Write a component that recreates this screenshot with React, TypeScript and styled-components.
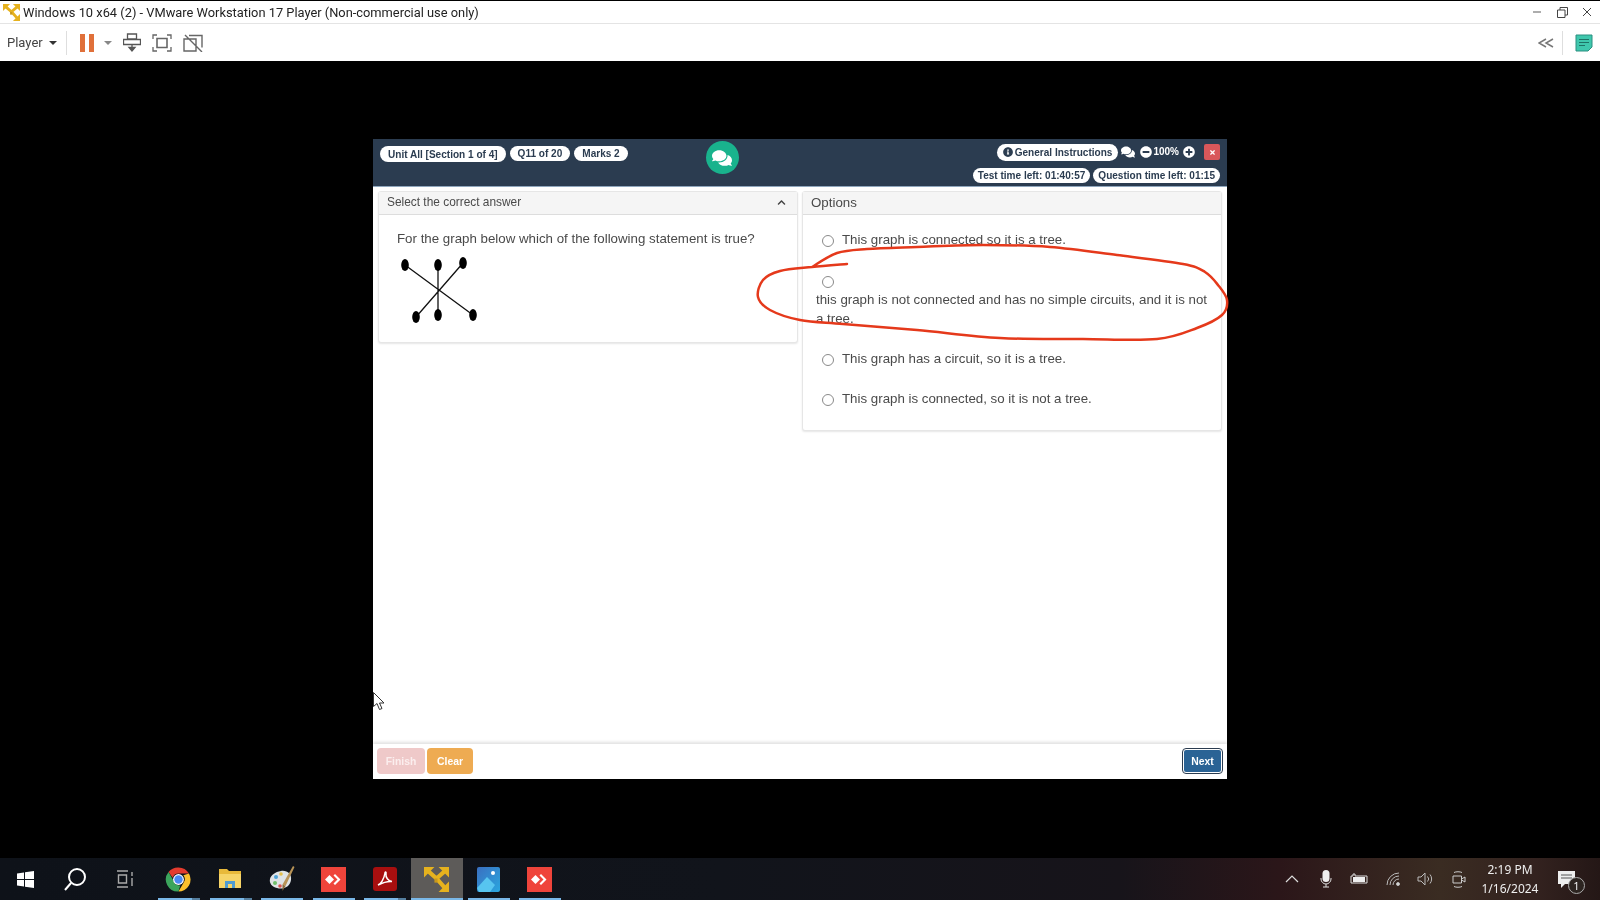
import React from "react";
import styled, { createGlobalStyle } from "styled-components";
import { FaComments, FaInfoCircle, FaMinusCircle, FaPlusCircle, FaTimes, FaChevronUp } from "react-icons/fa";

const Global = createGlobalStyle`
  html, body { margin: 0; padding: 0; background: #000; overflow: hidden; }
  * { box-sizing: border-box; }
`;

const Screen = styled.div`
  position: relative;
  width: 1600px;
  height: 900px;
  display: flex;
  flex-direction: column;
  background: #000;
  font-family: "Liberation Sans", Arial, sans-serif;
  filter: blur(0.3px);
`;

/* ---------- VMware window chrome ---------- */
const TitleBar = styled.div`
  height: 23px;
  margin-top: 1px;
  flex: none;
  display: flex;
  align-items: center;
  background: #fff;
  border-bottom: 1px solid #e4e4e4;
  padding-left: 3px;
  font-family: Roboto, sans-serif;
  font-size: 12.85px;
  color: #222;
`;
const TitleText = styled.span`
  margin-left: 3px;
  white-space: nowrap;
`;
const WindowControls = styled.div`
  margin-left: auto;
  display: flex;
  align-items: center;
`;
const WindowButton = styled.div`
  width: 24px;
  height: 20px;
  display: flex;
  align-items: center;
  justify-content: center;
  margin-right: 1px;
`;
const ToolBar = styled.div`
  height: 37px;
  flex: none;
  display: flex;
  align-items: center;
  background: #fff;
  font-family: Roboto, sans-serif;
  font-size: 13px;
  color: #444;
`;
const PlayerMenu = styled.span`
  margin-left: 7px;
  width: 34px;
`;
const Caret = styled.span<{ $c: string; $ml: number }>`
  width: 0;
  height: 0;
  margin-left: ${(p) => p.$ml}px;
  border-left: 4px solid transparent;
  border-right: 4px solid transparent;
  border-top: 4px solid ${(p) => p.$c};
`;
const ToolSep = styled.span<{ $ml: number }>`
  width: 1px;
  height: 24px;
  background: #dedede;
  margin-left: ${(p) => p.$ml}px;
`;
const PauseIcon = styled.span`
  width: 14px;
  height: 18px;
  margin-left: 13px;
  border-left: 5px solid #e0703a;
  border-right: 5px solid #e0703a;
`;
const ToolIcon = styled.span<{ $ml: number }>`
  display: flex;
  margin-left: ${(p) => p.$ml}px;
`;
const ToolRight = styled.div`
  margin-left: auto;
  display: flex;
  align-items: center;
  padding-right: 7px;
`;

/* ---------- Stage and exam app ---------- */
const Stage = styled.div`
  flex: 1;
  min-height: 0;
  padding: 78px 0 0 373px;
  background: #000;
`;
const ExamApp = styled.div`
  width: 854px;
  height: 640px;
  display: flex;
  flex-direction: column;
  background: #fff;
`;
const AppHeader = styled.header`
  height: 48px;
  flex: none;
  display: flex;
  background: #2b3c50;
  padding: 0 7px;
  border-bottom: 1px solid #8fa6bd;
`;
const PillGroup = styled.div`
  display: flex;
  gap: 4px;
  padding-top: 7px;
  align-items: flex-start;
`;
const Pill = styled.span<{ $h?: number; $pad?: number; $ml?: number }>`
  display: inline-flex;
  align-items: center;
  justify-content: center;
  gap: 2px;
  height: ${(p) => p.$h ?? 16}px;
  padding: 0 ${(p) => p.$pad ?? 8}px;
  margin-left: ${(p) => p.$ml ?? 0}px;
  border-radius: 9px;
  background: #fff;
  color: #2b3c50;
  font-size: 10.05px;
  font-weight: 700;
  white-space: nowrap;
`;
const ChatBubble = styled.div`
  width: 33px;
  height: 33px;
  margin: 2px 0 0 78px;
  border-radius: 50%;
  background: #19b38d;
  color: #fff;
  display: flex;
  align-items: center;
  justify-content: center;
  font-size: 20px;
`;
const HeaderRight = styled.div`
  margin-left: auto;
  display: flex;
  flex-direction: column;
  align-items: flex-end;
  gap: 7px;
  padding-top: 5px;
`;
const HeaderRow = styled.div`
  display: flex;
  align-items: center;
  color: #fff;
`;
const Zoom = styled.span`
  font-size: 10px;
  font-weight: 700;
  margin: 0 4px 2px 1px;
`;
const HeaderIcon = styled.span<{ $ml?: number; $s: number }>`
  display: flex;
  margin-left: ${(p) => p.$ml ?? 0}px;
  margin-bottom: 1px;
  font-size: ${(p) => p.$s}px;
`;
const CloseBox = styled.span`
  width: 16px;
  height: 16px;
  margin-left: 9px;
  align-self: flex-start;
  border-radius: 2px;
  background: #d9575a;
  color: #fff;
  font-size: 7px;
  display: flex;
  align-items: center;
  justify-content: center;
`;
const Content = styled.main`
  flex: 1;
  min-height: 0;
  display: flex;
  align-items: flex-start;
  gap: 4px;
  padding: 4px 5px 0;
`;
const Panel = styled.section<{ $h: number }>`
  flex: 1;
  height: ${(p) => p.$h}px;
  border: 1px solid #e6e6e6;
  border-radius: 3px;
  box-shadow: 0 1px 2px rgba(0, 0, 0, 0.1);
  background: #fff;
`;
const PanelHead = styled.div`
  height: 23px;
  display: flex;
  align-items: center;
  justify-content: space-between;
  padding: 0 11px 2px 8px;
  background: #f5f5f5;
  border-bottom: 1px solid #ddd;
  color: #4a4a4a;
`;
const HeadSmall = styled.span`
  font-size: 11.9px;
`;
const HeadLarge = styled.span`
  font-size: 13.3px;
`;
const QuestionBody = styled.div`
  padding: 15px 18px 0;
  color: #4a4a4a;
  font-size: 13.3px;
  line-height: 18px;
`;
const Graph = styled.svg`
  display: block;
  margin: 8px 0 0 3px;
`;
const OptionList = styled.div`
  padding: 15px 8px 0 13px;
  display: flex;
  flex-direction: column;
  color: #4a4a4a;
  font-size: 13.3px;
  line-height: 19px;
`;
const OptionRow = styled.label<{ $h: number }>`
  height: ${(p) => p.$h}px;
  display: block;
`;
const OptionLine = styled.div`
  display: flex;
  align-items: center;
  padding-left: 6px;
  height: 19px;
`;
const Radio = styled.span`
  width: 12px;
  height: 12px;
  flex: none;
  margin: 2px 8px 0 0;
  border: 1px solid #8a8a8a;
  border-radius: 50%;
  background: #fff;
`;
const AppFooter = styled.footer`
  flex: none;
  height: 35px;
  display: flex;
  align-items: center;
  padding: 0 4px 1px;
  gap: 2px;
  background: #fff;
  box-shadow: 0 -2px 3px rgba(0, 0, 0, 0.12);
`;
const ActionButton = styled.button<{ $bg: string; $w: number; $c?: string }>`
  width: ${(p) => p.$w}px;
  height: 26px;
  padding: 0;
  border: none;
  border-radius: 4px;
  background: ${(p) => p.$bg};
  color: ${(p) => p.$c ?? "#fff"};
  font-family: inherit;
  font-size: 10.4px;
  font-weight: 700;
`;
const NextButton = styled.button`
  width: 41px;
  height: 26px;
  margin-left: auto;
  padding: 0;
  border: 2px solid #fff;
  outline: 1.5px solid #2b3c50;
  outline-offset: -1px;
  border-radius: 4px;
  background: #2a6395;
  color: #fff;
  font-family: inherit;
  font-size: 10.4px;
  font-weight: 700;
`;

/* ---------- Windows taskbar ---------- */
const TaskBar = styled.div`
  height: 42px;
  flex: none;
  display: flex;
  align-items: stretch;
  background: linear-gradient(90deg, #0e1219 0%, #11141b 45%, #17141a 70%, #2b1619 80%, #3a2c22 90%, #33221f 96%, #241716 100%);
`;
const LeftSlot = styled.div<{ $w: number }>`
  width: ${(p) => p.$w}px;
  display: flex;
  align-items: center;
  justify-content: center;
`;
const AppSlot = styled.div<{ $active?: boolean; $stack?: boolean }>`
  position: relative;
  width: 51.6px;
  display: flex;
  align-items: center;
  justify-content: center;
  background: ${(p) => (p.$active ? "#5d5b59" : "transparent")};

  &::after {
    content: "";
    position: absolute;
    bottom: 0;
    left: ${(p) => (p.$active ? 0 : 5)}px;
    width: ${(p) => (p.$active ? 51.6 : 42)}px;
    height: 2px;
    background: ${(p) =>
      p.$stack ? "linear-gradient(90deg, #7ab8e8 80%, #557f9f 80%)" : "#7ab8e8"};
  }
`;
const Tray = styled.div`
  margin-left: auto;
  display: flex;
  align-items: stretch;
  padding-right: 12px;
`;
const TraySlot = styled.div`
  width: 33.4px;
  display: flex;
  align-items: center;
  justify-content: center;
`;
const Clock = styled.div`
  width: 68px;
  display: flex;
  flex-direction: column;
  align-items: center;
  justify-content: center;
  color: #eee;
  font-family: "Noto Sans", sans-serif;
  font-size: 12px;
  line-height: 19px;
  white-space: nowrap;
`;
const Notify = styled.div`
  width: 44px;
  position: relative;
  display: flex;
  align-items: center;
  justify-content: center;
`;
const NotifyBadge = styled.span`
  position: absolute;
  left: 24px;
  top: 19px;
  width: 17px;
  height: 17px;
  border-radius: 50%;
  border: 1px solid #aaa;
  background: #2c2420;
  color: #eee;
  font-family: "Noto Sans", sans-serif;
  font-size: 11px;
  line-height: 15px;
  text-align: center;
`;

/* ---------- overlays ---------- */
const Scribble = styled.svg`
  position: absolute;
  left: 0;
  top: 0;
  pointer-events: none;
`;
const Cursor = styled.svg`
  position: absolute;
  left: 373px;
  top: 692px;
`;

const pts: [number, number][] = [
  [847, 264], [812, 267], [780, 271], [763, 280], [758, 297], [770, 310], [800, 320], [843, 324],
  [917, 330], [1000, 338], [1083, 339], [1157, 339], [1197, 328], [1222, 315], [1227, 300], [1218, 285], [1205, 272],
  [1183, 264], [1117, 255], [1050, 247], [983, 245], [917, 247], [867, 249], [837, 253], [812, 267],
];
const smooth = (p: [number, number][]) => {
  let d = `M${p[0][0]} ${p[0][1]}`;
  for (let i = 0; i < p.length - 1; i++) {
    const a = p[Math.max(i - 1, 0)], b = p[i], c = p[i + 1], e = p[Math.min(i + 2, p.length - 1)];
    d += ` C${b[0] + (c[0] - a[0]) / 6} ${b[1] + (c[1] - a[1]) / 6} ${c[0] - (e[0] - b[0]) / 6} ${c[1] - (e[1] - b[1]) / 6} ${c[0]} ${c[1]}`;
  }
  return d;
};

const VmwareLogo = ({ s }: { s: number }) => (
  <svg width={s} height={s} viewBox="0 0 24 24" fill="#e6b21e">
    <path d="M0 0h10L0 10z" />
    <path d="M24 0H14l10 10z" />
    <path d="M24 24H14l10-10z" />
    <path d="M4 4l8 7M20 4l-8 7M12 11l8 9" fill="none" stroke="#e6b21e" strokeWidth="4" />
    <path d="M10 11h3v4h-3z" fill="#c9981c" />
  </svg>
);
const ChromeIcon = () => (
  <svg width="29" height="29" viewBox="0 0 48 48">
    <path d="M24 4a20 20 0 0 1 17.300 10H24a10 10 0 0 0-9.600 7L7.500 11.500A20 20 0 0 1 24 4z" fill="#e33b2e" />
    <path d="M41.300 14A20 20 0 0 1 24 44l8.600-15A10 10 0 0 0 32 17z" fill="#fbc02d" />
    <path d="M24 44A20 20 0 0 1 7.500 11.500l8.500 15A10 10 0 0 0 27 33.600z" fill="#3ba55c" />
    <circle cx="24" cy="24" r="9" fill="#fff" />
    <circle cx="24" cy="24" r="7" fill="#4a8af4" />
  </svg>
);
const FolderIcon = () => (
  <svg width="24" height="24" viewBox="0 0 24 24">
    <path d="M1 2h8l2 2h12v5H1z" fill="#e8b93a" />
    <path d="M1 7h22v14H1z" fill="#f6d468" />
    <path d="M7 14h10v7h-3v-4h-4v4H7z" fill="#4f9bd1" />
  </svg>
);
const PaletteIcon = () => (
  <svg width="26" height="28" viewBox="0 0 26 28">
    <path d="M12 6c6-1 11 3 10 9-1 7-8 10-14 8-5-1-8-5-7-9 1-4 5-7 11-8z" fill="#dfe3e6" />
    <circle cx="7" cy="12" r="2" fill="#4fa3d8" />
    <circle cx="12" cy="9" r="1.800" fill="#e5c04b" />
    <circle cx="6" cy="18" r="2" fill="#6fbf6a" />
    <circle cx="11" cy="21" r="1.800" fill="#d9534f" />
    <path d="M24 1l1.500 1-9 19-3-1.500z" fill="#b99457" />
    <path d="M13.500 19.500l3 1.500-3 5z" fill="#8a6a3a" />
  </svg>
);
const AnydeskIcon = () => (
  <svg width="25" height="25" viewBox="0 0 25 25">
    <rect width="25" height="25" fill="#ef443b" />
    <path d="M8.500 8l4.500 4.500L8.500 17 4 12.500z" fill="#fff" />
    <path d="M14 7l5.500 5.500L14 18l-1.500-1.500 4-4-4-4z" fill="#fff" />
  </svg>
);
const AcrobatIcon = () => (
  <svg width="24" height="24" viewBox="0 0 24 24">
    <rect width="24" height="24" rx="3" fill="#a80f0f" />
    <path d="M5 18c3-1 6-6 7-12 0-1.500 1.500-1.500 1 1-.5 3 2 7 6 7.500-5-.5-9 1-14 3.500z" fill="none" stroke="#fff" strokeWidth="1.500" />
  </svg>
);
const PhotosIcon = () => (
  <svg width="23" height="25" viewBox="0 0 23 25">
    <defs>
      <linearGradient id="ph" x1="0" y1="0" x2="1" y2="1">
        <stop offset="0" stopColor="#3a6fc0" />
        <stop offset="1" stopColor="#2aa7e0" />
      </linearGradient>
    </defs>
    <rect width="23" height="25" rx="2" fill="url(#ph)" />
    <path d="M0 21l10-11 8 8-5 7H2z" fill="#57c5f0" />
    <circle cx="16" cy="6" r="2" fill="#fff" />
  </svg>
);

export default function App() {
  return (
    <Screen>
      <Global />
      <TitleBar>
        <VmwareLogo s={17} />
        <TitleText>Windows 10 x64 (2) - VMware Workstation 17 Player (Non-commercial use only)</TitleText>
        <WindowControls>
          <WindowButton>
            <svg width="10" height="10" viewBox="0 0 10 10"><path d="M1 5h8" stroke="#777" strokeWidth="1.200" /></svg>
          </WindowButton>
          <WindowButton>
            <svg width="11" height="11" viewBox="0 0 11 11" fill="none" stroke="#444"><path d="M.5 3h7.500v7.500H.5zM3 3V.5h7.500V8H8" /></svg>
          </WindowButton>
          <WindowButton>
            <svg width="10" height="10" viewBox="0 0 10 10"><path d="M1 1l8 8M9 1l-8 8" stroke="#444" /></svg>
          </WindowButton>
        </WindowControls>
      </TitleBar>
      <ToolBar>
        <PlayerMenu>Player</PlayerMenu>
        <Caret $c="#333" $ml={8} />
        <ToolSep $ml={9} />
        <PauseIcon />
        <Caret $c="#888" $ml={10} />
        <ToolIcon $ml={11}>
          <svg width="18" height="19" viewBox="0 0 18 19" fill="none" stroke="#555" strokeWidth="1.300">
            <path d="M4.500 1h9v5h-9zM.5 6.500h17v5H.5zM9 11.500v3" />
            <path d="M6 14.500h6l-3 3.500z" fill="#555" />
          </svg>
        </ToolIcon>
        <ToolIcon $ml={11}>
          <svg width="20" height="18" viewBox="0 0 20 18" fill="none" stroke="#666" strokeWidth="1.300">
            <path d="M1 5V1h4M15 1h4v4M19 13v4h-4M5 17H1v-4" />
            <path d="M5 4.500h10v9H5z" strokeWidth="1.600" />
          </svg>
        </ToolIcon>
        <ToolIcon $ml={11}>
          <svg width="20" height="18" viewBox="0 0 20 18" fill="none" stroke="#666" strokeWidth="1.400">
            <path d="M6 1.500h13v12M1 5h12v12H1zM2 1l17 17" />
          </svg>
        </ToolIcon>
        <ToolRight>
          <svg width="16" height="10" viewBox="0 0 16 10" fill="none" stroke="#777" strokeWidth="1.500"><path d="M8 1L1 5l7 4M15 1L8 5l7 4" /></svg>
          <ToolSep $ml={8} />
          <ToolIcon $ml={12}>
            <svg width="18" height="18" viewBox="0 0 18 18">
              <path d="M1 1h16v12l-4 4H1z" fill="#3fc7ad" stroke="#2b8f80" />
              <path d="M4 5.500h10M4 8.500h10M4 11.500h6" stroke="#1f7266" strokeWidth="1" />
            </svg>
          </ToolIcon>
        </ToolRight>
      </ToolBar>

      <Stage>
        <ExamApp>
          <AppHeader>
            <PillGroup>
              <Pill $h={16}>Unit All [Section 1 of 4]</Pill>
              <Pill $h={15}>Q11 of 20</Pill>
              <Pill $h={15}>Marks 2</Pill>
            </PillGroup>
            <ChatBubble><FaComments /></ChatBubble>
            <HeaderRight>
              <HeaderRow>
                <Pill $h={17} $pad={6}><FaInfoCircle />General Instructions</Pill>
                <HeaderIcon $ml={3} $s={14}><FaComments /></HeaderIcon>
                <HeaderIcon $ml={5} $s={12}><FaMinusCircle /></HeaderIcon>
                <Zoom>100%</Zoom>
                <HeaderIcon $s={12}><FaPlusCircle /></HeaderIcon>
                <CloseBox><FaTimes /></CloseBox>
              </HeaderRow>
              <HeaderRow>
                <Pill $h={15} $pad={5}>Test time left: 01:40:57</Pill>
                <Pill $h={15} $pad={5} $ml={3}>Question time left: 01:15</Pill>
              </HeaderRow>
            </HeaderRight>
          </AppHeader>
          <Content>
            <Panel $h={152}>
              <PanelHead>
                <HeadSmall>Select the correct answer</HeadSmall>
                <FaChevronUp size={9} color="#444" />
              </PanelHead>
              <QuestionBody>
                For the graph below which of the following statement is true?
                <Graph width="90" height="72" viewBox="400 255 90 72">
                  <path d="M405 264L473 314M438 264V314M463 262L416 316" stroke="#111" strokeWidth="1.300" fill="none" />
                  <ellipse cx="405" cy="264" rx="3.800" ry="6" fill="#000" />
                  <ellipse cx="438" cy="264" rx="3.800" ry="6" fill="#000" />
                  <ellipse cx="463" cy="262" rx="3.800" ry="6" fill="#000" />
                  <ellipse cx="416" cy="316" rx="3.800" ry="6" fill="#000" />
                  <ellipse cx="438" cy="314" rx="3.800" ry="6" fill="#000" />
                  <ellipse cx="473" cy="314" rx="3.800" ry="6" fill="#000" />
                </Graph>
              </QuestionBody>
            </Panel>
            <Panel $h={240}>
              <PanelHead><HeadLarge>Options</HeadLarge></PanelHead>
              <OptionList>
                <OptionRow $h={41}>
                  <OptionLine><Radio />This graph is connected so it is a tree.</OptionLine>
                </OptionRow>
                <OptionRow $h={78}>
                  <OptionLine><Radio /></OptionLine>
                  this graph is not connected and has no simple circuits, and it is not a tree.
                </OptionRow>
                <OptionRow $h={40}>
                  <OptionLine><Radio />This graph has a circuit, so it is a tree.</OptionLine>
                </OptionRow>
                <OptionRow $h={40}>
                  <OptionLine><Radio />This graph is connected, so it is not a tree.</OptionLine>
                </OptionRow>
              </OptionList>
            </Panel>
          </Content>
          <AppFooter>
            <ActionButton $bg="#efc9c9" $w={48} $c="#fbeeee">Finish</ActionButton>
            <ActionButton $bg="#eeab52" $w={46}>Clear</ActionButton>
            <NextButton>Next</NextButton>
          </AppFooter>
        </ExamApp>
      </Stage>

      <TaskBar>
        <LeftSlot $w={50}>
          <svg width="17" height="17" viewBox="0 0 17 17" fill="#fff"><path d="M0 2.500l7-1v6.500H0zM8 1.300L17 0v8H8zM0 9h7v6.500l-7-1zM8 9h9v8l-9-1.300z" /></svg>
        </LeftSlot>
        <LeftSlot $w={50}>
          <svg width="24" height="24" viewBox="0 0 24 24" fill="none" stroke="#fff" strokeWidth="2"><circle cx="14" cy="10" r="8" /><path d="M8 16l-6 7" /></svg>
        </LeftSlot>
        <LeftSlot $w={50}>
          <svg width="19" height="18" viewBox="0 0 19 18" fill="none" stroke="#aaa" strokeWidth="1.400"><path d="M1 1h11M1 17h11M2.500 5h8v8h-8zM16 2v4M16 8v8" /></svg>
        </LeftSlot>
        <LeftSlot $w={3} />
        <AppSlot $stack><ChromeIcon /></AppSlot>
        <AppSlot $stack><FolderIcon /></AppSlot>
        <AppSlot><PaletteIcon /></AppSlot>
        <AppSlot><AnydeskIcon /></AppSlot>
        <AppSlot $stack><AcrobatIcon /></AppSlot>
        <AppSlot $active><VmwareLogo s={25} /></AppSlot>
        <AppSlot><PhotosIcon /></AppSlot>
        <AppSlot><AnydeskIcon /></AppSlot>
        <Tray>
          <TraySlot>
            <svg width="14" height="8" viewBox="0 0 14 8" fill="none" stroke="#ddd" strokeWidth="1.200"><path d="M1 7l6-6 6 6" /></svg>
          </TraySlot>
          <TraySlot>
            <svg width="12" height="18" viewBox="0 0 12 18"><rect x="2.500" y="0" width="7" height="12" rx="3.500" fill="#eee" /><path d="M1 8v1a5 5 0 0 0 10 0V8M6 14v3M3 17h6" fill="none" stroke="#ddd" /></svg>
          </TraySlot>
          <TraySlot>
            <svg width="18" height="12" viewBox="0 0 18 12"><path d="M1 3h2V1h2v2h12v7H1z" fill="none" stroke="#ddd" /><path d="M3 4h12v5H3z" fill="#eee" /></svg>
          </TraySlot>
          <TraySlot>
            <svg width="14" height="14" viewBox="0 0 14 14" fill="none" stroke="#bbb"><path d="M1 13A12 12 0 0 1 13 1M4 13a9 9 0 0 1 9-9M7 13a6 6 0 0 1 6-6" /><circle cx="12" cy="12" r="1.500" fill="#ddd" /></svg>
          </TraySlot>
          <TraySlot>
            <svg width="17" height="14" viewBox="0 0 17 14" fill="none" stroke="#bbb"><path d="M1 5h3l4-4v12L4 9H1zM10.500 4.500a3.500 3.500 0 0 1 0 5M13 2.500a7 7 0 0 1 0 9" /></svg>
          </TraySlot>
          <TraySlot>
            <svg width="14" height="17" viewBox="0 0 14 17" fill="none" stroke="#ccc"><path d="M2 1.500c2-1 6-1 8 0M2 15.500c2 1 6 1 8 0M1 5h8.500v7H1zM9.500 8l3.500-2v5l-3.500-2" /></svg>
          </TraySlot>
          <Clock><span>2:19 PM</span><span>1/16/2024</span></Clock>
          <Notify>
            <svg width="17" height="17" viewBox="0 0 17 17"><path d="M0 0h17v13H7l-4 4v-4H0z" fill="#eee" /><path d="M3 4h11M3 7h11" stroke="#555" /></svg>
            <NotifyBadge>1</NotifyBadge>
          </Notify>
        </Tray>
      </TaskBar>

      <Scribble width="1600" height="900" viewBox="0 0 1600 900" fill="none">
        <path d={smooth(pts)} stroke="#e5391b" strokeWidth="2.500" strokeLinecap="round" strokeLinejoin="round" />
      </Scribble>
      <Cursor width="11" height="18" viewBox="0 0 11 18">
        <path d="M.5.500v14l3.500-3 2.500 6 2.500-1-2.500-5.500h4.500z" fill="#fff" stroke="#333" strokeWidth="1" />
      </Cursor>
    </Screen>
  );
}
